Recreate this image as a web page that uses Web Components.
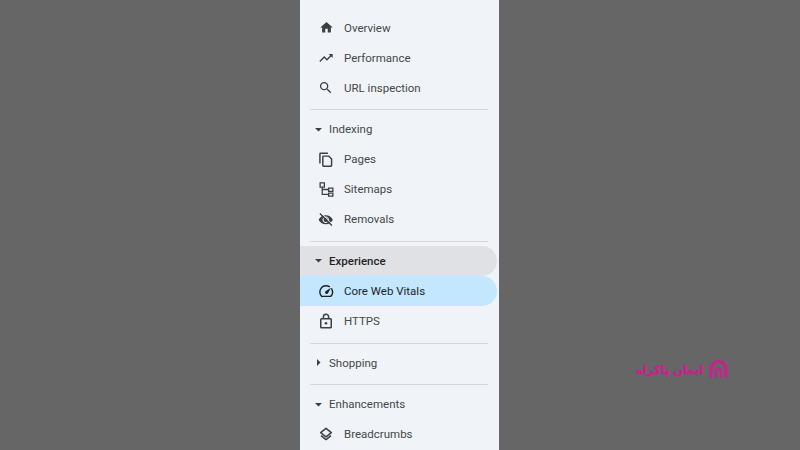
<!DOCTYPE html>
<html>
<head>
<meta charset="utf-8">
<style>
  html, body { margin: 0; height: 100%; overflow: hidden; background: #666666; }
  body { font-family: Roboto, "Liberation Sans", sans-serif; }
</style>
</head>
<body>
<side-nav>
  <nav-item icon="home">Overview</nav-item>
  <nav-item icon="trend">Performance</nav-item>
  <nav-item icon="search">URL inspection</nav-item>
  <nav-divider></nav-divider>
  <nav-group open>Indexing</nav-group>
  <nav-item icon="pages">Pages</nav-item>
  <nav-item icon="sitemap">Sitemaps</nav-item>
  <nav-item icon="removals">Removals</nav-item>
  <nav-divider></nav-divider>
  <nav-group open current>Experience</nav-group>
  <nav-item icon="gauge" active>Core Web Vitals</nav-item>
  <nav-item icon="lock">HTTPS</nav-item>
  <nav-divider></nav-divider>
  <nav-group>Shopping</nav-group>
  <nav-divider></nav-divider>
  <nav-group open>Enhancements</nav-group>
  <nav-item icon="layers">Breadcrumbs</nav-item>
</side-nav>
<brand-mark>ایمان پاکراه</brand-mark>

<script>
// size is the rendered px size of the 24-unit icon
const ICONS = {
  home: { size: 15, body: '<path fill="currentColor" d="M10 20v-6h4v6h5v-8h3L12 3 2 12h3v8z"/>' },
  trend: { size: 16, body: '<path fill="currentColor" d="M16 6l2.29 2.29-4.88 4.88-4-4L2 16.59 3.41 18l6-6 4 4 6.3-6.29L22 12V6z"/>' },
  search: { size: 15.5, body: '<path fill="currentColor" d="M15.5 14h-.79l-.28-.27A6.47 6.47 0 0 0 16 9.5 6.5 6.5 0 1 0 9.5 16c1.61 0 3.09-.59 4.23-1.57l.27.28v.79l5 4.99L20.49 19l-4.99-5zm-6 0C7.01 14 5 11.99 5 9.5S7.01 5 9.5 5 14 7.01 14 9.5 11.99 14 9.5 14z"/>' },
  pages: { size: 17.5, body: '<path fill="none" stroke="currentColor" stroke-width="2" stroke-linejoin="round" d="M15 3H5a1 1 0 0 0-1 1v13M9 7h7l4 4v9a1 1 0 0 1-1 1H9a1 1 0 0 1-1-1V8a1 1 0 0 1 1-1z"/>' },
  sitemap: { size: 17, body: '<path fill="none" stroke="currentColor" stroke-width="1.8" d="M3 2.5h6v6H3zM15 10h6v4.5h-6zM15 17h6v4.5h-6zM6 8.5V19h9M6 12h9"/>' },
  removals: { size: 15.5, body: '<path fill="currentColor" d="M12 5C7 5 2.73 8.11 1 12c1.73 3.89 6 7 11 7s9.27-3.11 11-7c-1.73-3.89-6-7-11-7zm0 12c-2.76 0-5-2.24-5-5s2.24-5 5-5 5 2.24 5 5-2.24 5-5 5z"/><circle cx="12" cy="12" r="3.4" fill="currentColor"/><path fill="none" stroke="currentColor" stroke-width="2.2" d="M3 2.5 21.5 21"/><path fill="none" stroke="#f0f4f9" stroke-width="1.4" d="M4.6 1.4 22.8 19.6"/>' },
  gauge: { size: 16.5, body: '<path fill="none" stroke="currentColor" stroke-width="2" stroke-linecap="round" d="M5.6 19.5A9 9 0 0 1 12 4c1.7 0 3.2.4 4.5 1.2M19.8 8.5A9 9 0 0 1 18.4 19.5H5.6"/><path fill="currentColor" d="M10.9 12 19 7l-4.8 8.2a1.9 1.9 0 1 1-3.3-3.2z"/>' },
  lock: { size: 18, body: '<path fill="none" stroke="currentColor" stroke-width="2" d="M6 9h12a1 1 0 0 1 1 1v10a1 1 0 0 1-1 1H6a1 1 0 0 1-1-1V10a1 1 0 0 1 1-1zM8.5 9V6.5a3.5 3.5 0 0 1 7 0V9"/><circle cx="12" cy="15" r="1.7" fill="currentColor"/>' },
  layers: { size: 16, body: '<path fill="none" stroke="currentColor" stroke-width="2.2" stroke-linejoin="round" d="M12 3.5 20 10l-8 6.2L4 10z"/><path fill="none" stroke="currentColor" stroke-width="2.2" stroke-linejoin="round" d="M4.5 14.5 12 20.4l7.5-5.9"/>' }
};

class SideNav extends HTMLElement {
  connectedCallback() {
    this.attachShadow({ mode: 'open' }).innerHTML = `
      <style>
        :host {
          display: flex;
          flex-direction: column;
          box-sizing: border-box;
          width: 199px;
          height: 450px;
          margin-left: 300px;
          padding-top: 12.6px;
          background: #f0f4f9;
          overflow: hidden;
        }
      </style>
      <slot></slot>`;
  }
}

class NavItem extends HTMLElement {
  connectedCallback() {
    const icon = ICONS[this.getAttribute('icon')];
    this.attachShadow({ mode: 'open' }).innerHTML = `
      <style>
        :host {
          display: flex;
          align-items: center;
          flex: none;
          height: 30px;
          margin-right: 2px;
          padding-left: 17px;
          border-radius: 0 15px 15px 0;
          color: #444746;
          font-size: 11.5px;
        }
        :host([active]) { background: #c2e7ff; color: #1f1f1f; }
        .ico {
          display: flex;
          align-items: center;
          justify-content: center;
          flex: none;
          width: 18px;
          margin-right: 9px;
          color: #3c3f42;
        }
        :host([active]) .ico { color: #1f1f1f; }
        svg { display: block; width: ${icon.size}px; height: ${icon.size}px; }
      </style>
      <span class="ico"><svg viewBox="0 0 24 24">${icon.body}</svg></span><slot></slot>`;
  }
}

class NavGroup extends HTMLElement {
  connectedCallback() {
    const caret = this.hasAttribute('open')
      ? '<path d="M0 0h7L3.5 3.5z" transform="translate(1 3)"/>'
      : '<path d="M0 0l3.5 3.5L0 7z" transform="translate(3 1)"/>';
    this.attachShadow({ mode: 'open' }).innerHTML = `
      <style>
        :host {
          display: flex;
          align-items: center;
          flex: none;
          height: 30px;
          margin-right: 2px;
          padding-left: 14px;
          border-radius: 0 15px 15px 0;
          color: #444746;
          font-size: 11.5px;
        }
        :host([current]) { background: #dfe1e5; color: #1f1f1f; font-weight: 500; }
        svg { flex: none; width: 9px; height: 9px; margin-right: 6px; fill: #3c3f42; }
      </style>
      <svg viewBox="0 0 9 9">${caret}</svg><slot></slot>`;
  }
}

class NavDivider extends HTMLElement {
  connectedCallback() {
    this.attachShadow({ mode: 'open' }).innerHTML = `
      <style>
        :host {
          display: block;
          flex: none;
          height: 1px;
          margin: 6.7px 11px 4px 10px;
          background: #d3d6da;
        }
      </style>`;
  }
}

// watermark floats over the grey backdrop
class BrandMark extends HTMLElement {
  connectedCallback() {
    this.attachShadow({ mode: 'open' }).innerHTML = `
      <style>
        :host {
          position: absolute;
          left: 636px;
          top: 359px;
          display: flex;
          align-items: center;
          gap: 5px;
          height: 21px;
          color: #cf1c8e;
        }
        span {
          direction: rtl;
          font-family: "DejaVu Sans", sans-serif;
          font-size: 11.5px;
          font-weight: 700;
          -webkit-text-stroke: .35px currentColor;
          white-space: nowrap;
        }
        svg { width: 21px; height: 21px; }
      </style>
      <span><slot></slot></span>
      <svg viewBox="0 0 21 21" fill="none" stroke="currentColor" stroke-width="3">
        <path d="M3 19V10a7.5 7.5 0 0 1 15 0v9"/>
        <path d="M8 19v-7a2.5 2.5 0 0 1 5 0v7" stroke-width="2.2"/>
      </svg>`;
  }
}

customElements.define('side-nav', SideNav);
customElements.define('nav-item', NavItem);
customElements.define('nav-group', NavGroup);
customElements.define('nav-divider', NavDivider);
customElements.define('brand-mark', BrandMark);
</script>
</body>
</html>
